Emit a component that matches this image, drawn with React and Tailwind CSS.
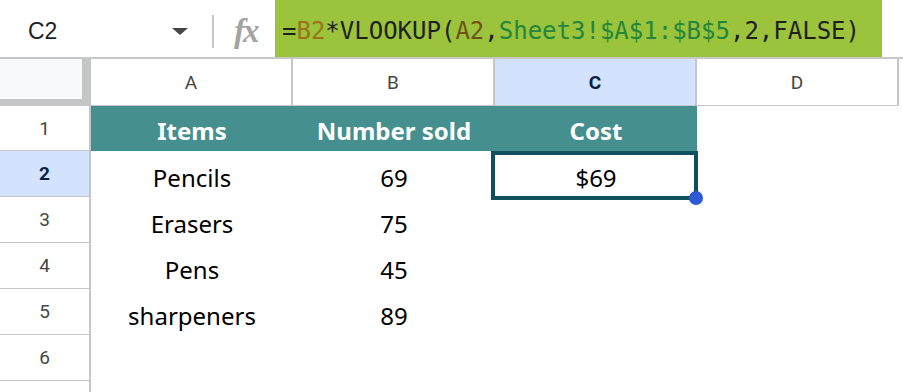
import React from 'react';

const rows = [
  { n: 1, a: 'Items', b: 'Number sold', c: 'Cost', head: true },
  { n: 2, a: 'Pencils', b: '69', c: '$69', active: true },
  { n: 3, a: 'Erasers', b: '75', c: '' },
  { n: 4, a: 'Pens', b: '45', c: '' },
  { n: 5, a: 'sharpeners', b: '89', c: '' },
  { n: 6, a: '', b: '', c: '' },
  { n: '', a: '', b: '', c: '' },
];

const cols = ['A', 'B', 'C', 'D'];

export default function App() {
  return (
    <div className="w-[903px] h-[392px] overflow-hidden bg-white" style={{ fontFamily: 'Roboto, Arial, sans-serif' }}>
      {/* toolbar */}
      <div className="flex h-[59px] items-start border-b-2 border-[#c7c7c7]">
        <div className="flex w-[275px] h-[57px] items-center pt-[5px]">
          <span className="w-[172px] pl-[28px] text-[23px] text-[#1f1f1f] font-['Liberation_Sans',Arial,sans-serif]">C2</span>
          <svg width="16" height="7" viewBox="0 0 16 7"><path d="M0 0 L16 0 L8 7 Z" fill="#444746" /></svg>
          <div className="ml-[24px] w-[2px] h-[33px] bg-[#c7c7c7]" />
          <span className="ml-[20px] text-[33px] italic font-bold text-[#a3a3a3] font-['Liberation_Serif',serif] tracking-[-2px] leading-none">fx</span>
        </div>
        <div className="flex w-[607px] h-[57px] items-center pl-[7px] pt-[5px] bg-[#9bc33c] text-[24px] text-[#1f1f1f] font-['DejaVu_Sans_Mono',monospace] whitespace-nowrap">
          <span>=</span>
          <span className="text-[#9a7416]">B2</span>
          <span>*VLOOKUP(</span>
          <span className="text-[#6e5318]">A2</span>
          <span>,</span>
          <span className="text-[#23863a]">Sheet3!$A$1:$B$5</span>
          <span>,2,FALSE)</span>
        </div>
      </div>

      {/* column headers */}
      <div className="flex h-[47px]">
        <div className="w-[91px] h-full bg-[#f8f9fa] border-r-[9px] border-b-[7px] border-[#c4c7c5]" />
        {cols.map((c) => (
          <div
            key={c}
            className={
              c === 'C'
                ? 'flex w-[202px] h-full items-center justify-center pt-[3px] border-r-2 border-b border-[#c4c7c5] bg-[#d3e3fd] text-[19px] font-bold text-[#0b1f44]'
                : 'flex w-[202px] h-full items-center justify-center pt-[3px] border-r-2 border-b border-[#c4c7c5] text-[19px] text-[#444746]'
            }
          >
            {c}
          </div>
        ))}
      </div>

      {/* rows */}
      {rows.map((r, idx) => (
        <div key={idx} className={r.head ? 'flex h-[45px]' : 'flex h-[46px]'}>
          <div
            className={
              r.active
                ? 'flex w-[91px] h-full items-center justify-center pt-[2px] border-r-2 border-b border-[#c4c7c5] bg-[#d3e3fd] text-[19px] font-bold text-[#0b1f44]'
                : 'flex w-[91px] h-full items-center justify-center pt-[2px] border-r-2 border-b border-[#c4c7c5] text-[19px] text-[#444746]'
            }
          >
            {r.n}
          </div>
          {[r.a, r.b, r.c].map((v, i) => (
            <div
              key={i}
              className={
                r.head
                  ? 'flex w-[202px] h-full items-center justify-center pt-[4px] bg-[#45908e] text-[24px] font-bold text-white font-["Noto_Sans",sans-serif]'
                  : 'relative flex w-[202px] h-full items-center justify-center pt-[7px] text-[24px] text-black font-["Noto_Sans",sans-serif]'
              }
            >
              {v}
              {r.active && i === 2 && (
                <div className="absolute -left-[4px] top-0 -right-[1px] -bottom-[3px] border-4 border-[#104f5d]">
                  <div className="absolute -right-[9px] -bottom-[9px] w-[14px] h-[14px] rounded-full bg-[#2c59d4]" />
                </div>
              )}
            </div>
          ))}
          <div className="w-[202px] h-full" />
        </div>
      ))}
    </div>
  );
}
